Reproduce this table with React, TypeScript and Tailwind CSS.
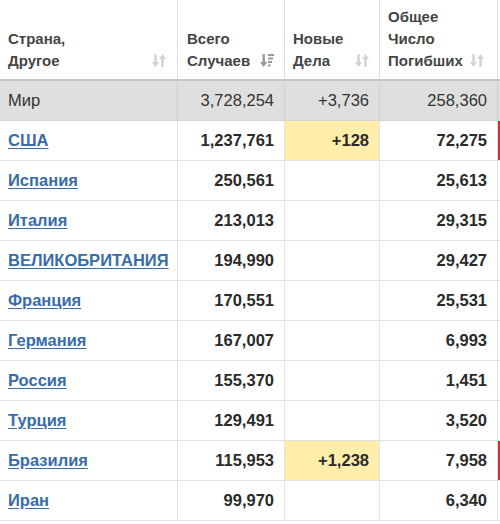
import React from "react";

const SortIcon = ({ active = false }: { active?: boolean }) =>
  active ? (
    <svg width="14" height="15" viewBox="0 0 14 15" className="shrink-0">
      <rect x="2.5" y="1" width="2.4" height="9" fill="#9a9a9a" />
      <polygon points="0,9 7.4,9 3.7,14" fill="#9a9a9a" />
      <rect x="8" y="1" width="6" height="2" fill="#9a9a9a" />
      <rect x="8" y="4.5" width="5" height="2" fill="#9a9a9a" />
      <rect x="8" y="8" width="4" height="2" fill="#9a9a9a" />
      <rect x="8" y="11.5" width="2.5" height="2" fill="#9a9a9a" />
    </svg>
  ) : (
    <svg width="14" height="15" viewBox="0 0 14 15" className="shrink-0">
      <rect x="2.3" y="1" width="2.4" height="9" fill="#d2d2d2" />
      <polygon points="0,9 7,9 3.5,14" fill="#d2d2d2" />
      <rect x="9.3" y="5" width="2.4" height="9" fill="#d2d2d2" />
      <polygon points="7,6 14,6 10.5,1" fill="#d2d2d2" />
    </svg>
  );

type Row = {
  name: string;
  total: string;
  newCases: string;
  deaths: string;
  red?: boolean;
};

const rows: Row[] = [
  { name: "США", total: "1,237,761", newCases: "+128", deaths: "72,275", red: true },
  { name: "Испания", total: "250,561", newCases: "", deaths: "25,613" },
  { name: "Италия", total: "213,013", newCases: "", deaths: "29,315" },
  { name: "ВЕЛИКОБРИТАНИЯ", total: "194,990", newCases: "", deaths: "29,427" },
  { name: "Франция", total: "170,551", newCases: "", deaths: "25,531" },
  { name: "Германия", total: "167,007", newCases: "", deaths: "6,993" },
  { name: "Россия", total: "155,370", newCases: "", deaths: "1,451" },
  { name: "Турция", total: "129,491", newCases: "", deaths: "3,520" },
  { name: "Бразилия", total: "115,953", newCases: "+1,238", deaths: "7,958", red: true },
  { name: "Иран", total: "99,970", newCases: "", deaths: "6,340" },
];

export default function App() {
  return (
    <div
      className="w-[500px] h-[524px] overflow-hidden bg-white"
      style={{ fontFamily: '"Liberation Sans", Arial, sans-serif' }}
    >
      <div className="w-[520px]">
        {/* Header */}
        <div className="flex h-[81px] border-b-2 border-[#c4c4c4] text-[15px] font-bold leading-[22px] text-[#454545]">
          <div className="flex w-[178px] items-end justify-between border-r border-[#dedede] pb-[7px] pl-[8px] pr-[11px]">
            <div>
              Страна,
              <br />
              Другое
            </div>
            <div className="mb-[4px]">
              <SortIcon />
            </div>
          </div>
          <div className="flex w-[107px] items-end justify-between border-r border-[#dedede] pb-[7px] pl-[9px] pr-[10px]">
            <div>
              Всего
              <br />
              Случаев
            </div>
            <div className="mb-[4px]">
              <SortIcon active />
            </div>
          </div>
          <div className="flex w-[95px] items-end justify-between border-r border-[#dedede] pb-[7px] pl-[8px] pr-[10px]">
            <div>
              Новые
              <br />
              Дела
            </div>
            <div className="mb-[4px]">
              <SortIcon />
            </div>
          </div>
          <div className="flex w-[118px] items-end justify-between border-r border-[#dedede] pb-[7px] pl-[8px] pr-[13px]">
            <div className="-mt-[3px]">
              Общее
              <br />
              Число
              <br />
              Погибших
            </div>
            <div className="mb-[4px]">
              <SortIcon />
            </div>
          </div>
          <div className="w-[22px]" />
        </div>

        {/* World row */}
        <div className="flex h-[40px] border-b border-[#d4d4d4] bg-[#dfdfdf] text-[16.5px] text-[#333]">
          <div className="flex w-[178px] items-center border-r border-[#d0d0d0] pl-[8px]">Мир</div>
          <div className="flex w-[107px] items-center justify-end border-r border-[#d0d0d0] pr-[10px]">
            3,728,254
          </div>
          <div className="flex w-[95px] items-center justify-end border-r border-[#d0d0d0] pr-[10px]">
            +3,736
          </div>
          <div className="flex w-[118px] items-center justify-end border-r border-[#d0d0d0] pr-[10px]">
            258,360
          </div>
          <div className="w-[22px]" />
        </div>

        {rows.map((r) => (
          <div
            key={r.name}
            className="flex h-[40px] border-b border-[#e2e2e2] text-[16.5px] font-bold text-[#2a2a2a]"
          >
            <div className="flex w-[178px] items-center border-r border-[#e2e2e2] pl-[8px]">
              <a href="#" className="text-[#3a6ca8] underline underline-offset-2">
                {r.name}
              </a>
            </div>
            <div className="flex w-[107px] items-center justify-end border-r border-[#e2e2e2] pr-[10px]">
              {r.total}
            </div>
            <div
              className={
                r.newCases
                  ? "flex w-[95px] items-center justify-end border-r border-[#e2e2e2] bg-[#ffeeaa] pr-[10px]"
                  : "flex w-[95px] items-center justify-end border-r border-[#e2e2e2] pr-[10px]"
              }
            >
              {r.newCases}
            </div>
            <div className="flex w-[118px] items-center justify-end border-r border-[#e2e2e2] pr-[10px]">
              {r.deaths}
            </div>
            <div className={r.red ? "w-[22px] bg-[#e0262b]" : "w-[22px]"} />
          </div>
        ))}
      </div>
    </div>
  );
}
